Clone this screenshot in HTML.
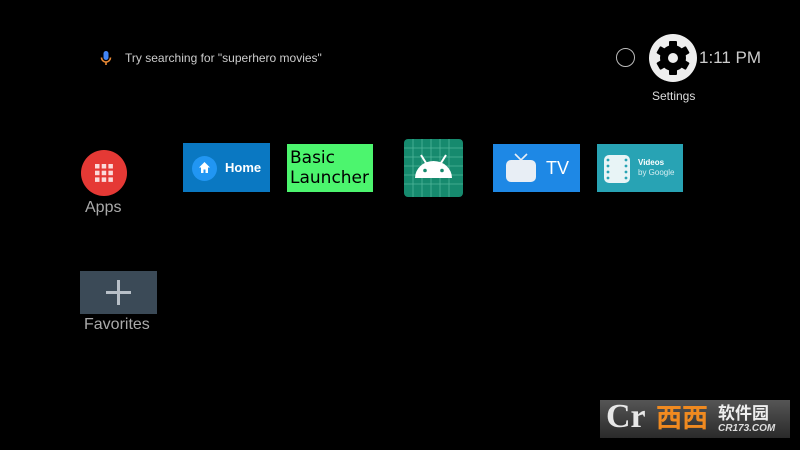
<!DOCTYPE html>
<html><head><meta charset="utf-8"><style>
body{margin:0;width:800px;height:450px;background:#000;position:relative;overflow:hidden;font-family:"Liberation Sans",sans-serif}
.a{position:absolute}
.t{position:absolute;color:#ccc;white-space:nowrap}
</style></head><body>
<svg class="a" style="left:100px;top:50px" width="12" height="16" viewBox="0 0 12 16">
<rect x="3.5" y="1" width="5" height="9" rx="2.5" fill="#4285f4"/>
<path d="M1.5 7.5a4.5 4.5 0 0 0 9 0" stroke="#ea8a35" stroke-width="1.6" fill="none"/>
<rect x="5.2" y="11.5" width="1.6" height="3.5" fill="#ea8a35"/></svg>
<div class="t" style="left:125px;top:51px;font-size:12px">Try searching for "superhero movies"</div>
<div class="a" style="left:616px;top:48px;width:17px;height:17px;border:1.5px solid #bbb;border-radius:50%"></div>
<svg class="a" style="left:649px;top:34px" width="48" height="48" viewBox="0 0 48 48">
<circle cx="24" cy="24" r="24" fill="#eee"/>
<g fill="#000" transform="translate(24 24)">
<circle r="13"/>
<g id="k"><rect x="-4" y="-17" width="8" height="7" rx="1"/></g>
<use href="#k" transform="rotate(60)"/><use href="#k" transform="rotate(120)"/><use href="#k" transform="rotate(180)"/><use href="#k" transform="rotate(240)"/><use href="#k" transform="rotate(300)"/>
<circle r="5" fill="#eee"/></g></svg>
<div class="t" style="left:699px;top:48px;font-size:17px">1:11 PM</div>
<div class="t" style="left:652px;top:89px;font-size:12px;color:#ddd">Settings</div>

<div class="a" style="left:81px;top:150px;width:46px;height:46px;border-radius:50%;background:#e53935"></div>
<svg class="a" style="left:94px;top:163px" width="20" height="20" viewBox="0 0 20 20" fill="#fbdada">
<rect x="1" y="1" width="4.5" height="4.5"/><rect x="7.7" y="1" width="4.5" height="4.5"/><rect x="14.4" y="1" width="4.5" height="4.5"/>
<rect x="1" y="7.7" width="4.5" height="4.5"/><rect x="7.7" y="7.7" width="4.5" height="4.5"/><rect x="14.4" y="7.7" width="4.5" height="4.5"/>
<rect x="1" y="14.4" width="4.5" height="4.5"/><rect x="7.7" y="14.4" width="4.5" height="4.5"/><rect x="14.4" y="14.4" width="4.5" height="4.5"/></svg>
<div class="t" style="left:85px;top:199px;font-size:16px;color:#aaa">Apps</div>

<div class="a" style="left:183px;top:143px;width:87px;height:49px;background:#0a78c2"></div>
<div class="a" style="left:192px;top:156px;width:25px;height:25px;border-radius:50%;background:#2196f3"></div>
<svg class="a" style="left:198px;top:161px" width="13" height="13" viewBox="0 0 13 13"><path d="M6.5 1L1 6.5h2V12h2.5V8.5h2V12H10V6.5h2z" fill="#fff"/></svg>
<div class="t" style="left:225px;top:160px;font-size:13px;font-weight:bold;color:#fff">Home</div>

<div class="a" style="left:287px;top:144px;width:86px;height:48px;background:#4cf56e"></div>
<div class="t" style="left:290px;top:148px;font-size:17px;line-height:20px;color:#000;font-family:'DejaVu Sans',sans-serif">Basic<br>Launcher</div>

<svg class="a" style="left:404px;top:139px" width="59" height="58" viewBox="0 0 59 58">
<rect width="59" height="58" rx="4" fill="#168a6e"/>
<g stroke="#4fb59a" stroke-width="0.8"><path d="M0 9H59M0 18H59M0 27H59M0 36H59M0 45H59M9 0V58M18 0V58M27 0V58M36 0V58M45 0V58"/></g>
<path d="M11 39a18.5 17 0 0 1 37 0z" fill="#fff"/>
<path d="M17 16l5 8M42 16l-5 8" stroke="#fff" stroke-width="2"/>
<circle cx="21" cy="31.5" r="1.8" fill="#168a6e"/><circle cx="38" cy="31.5" r="1.8" fill="#168a6e"/></svg>

<div class="a" style="left:493px;top:144px;width:87px;height:48px;background:#1e88e5"></div>
<svg class="a" style="left:505px;top:153px" width="32" height="30" viewBox="0 0 32 30"><path d="M10 1l6 6 6-6" stroke="#e8eef5" stroke-width="1.6" fill="none"/><rect x="1" y="7" width="30" height="22" rx="5" fill="#e8eef5"/></svg>
<div class="t" style="left:546px;top:158px;font-size:18px;color:#fff">TV</div>

<div class="a" style="left:597px;top:144px;width:86px;height:48px;background:#28a3b4"></div>
<svg class="a" style="left:603px;top:154px" width="28" height="30" viewBox="0 0 28 30"><rect x="1" y="1" width="26" height="28" rx="5" fill="#e8f4f6"/>
<g fill="#28a3b4"><circle cx="5" cy="6" r="1.4"/><circle cx="5" cy="12" r="1.4"/><circle cx="5" cy="18" r="1.4"/><circle cx="5" cy="24" r="1.4"/><circle cx="23" cy="6" r="1.4"/><circle cx="23" cy="12" r="1.4"/><circle cx="23" cy="18" r="1.4"/><circle cx="23" cy="24" r="1.4"/></g></svg>
<div class="t" style="left:638px;top:158px;font-size:8px;font-weight:bold;color:#fff">Videos</div>
<div class="t" style="left:638px;top:168px;font-size:8px;color:#d6eef2">by Google</div>

<div class="a" style="left:80px;top:271px;width:77px;height:43px;background:#3b4a57"></div>
<div class="a" style="left:106px;top:291px;width:25px;height:3px;background:#b8c0c8"></div>
<div class="a" style="left:117px;top:280px;width:3px;height:25px;background:#b8c0c8"></div>
<div class="t" style="left:84px;top:316px;font-size:16px;color:#aaa">Favorites</div>

<div class="a" style="left:600px;top:400px;width:190px;height:38px;background:linear-gradient(#555,#2a2a2a)"></div>
<div class="t" style="left:606px;top:398px;font-size:34px;font-weight:bold;color:#e8e8e8;font-family:'Liberation Serif',serif">Cr</div>
<div class="t" style="left:656px;top:402px;font-size:26px;font-weight:bold;color:#f08a20;font-family:'Noto Sans CJK SC',sans-serif;line-height:30px">西西</div>
<div class="t" style="left:718px;top:402px;font-size:17px;font-weight:bold;color:#eee;font-family:'Noto Sans CJK SC',sans-serif;line-height:20px">软件园</div>
<div class="t" style="left:718px;top:423px;font-size:10px;font-weight:bold;font-style:italic;color:#ddd">CR173.COM</div>
</body></html>
